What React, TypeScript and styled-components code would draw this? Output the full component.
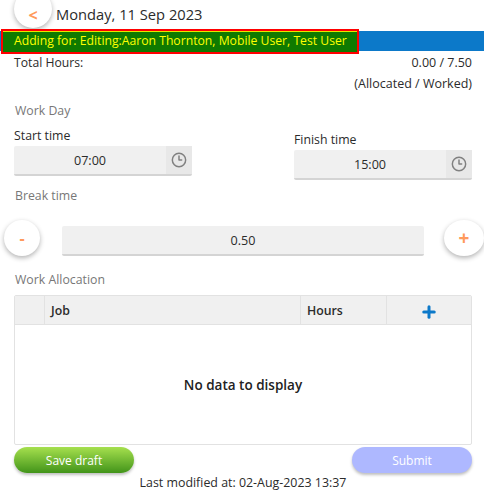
import styled, { createGlobalStyle } from "styled-components";
import { Clock3, Plus } from "lucide-react";

const GlobalStyle = createGlobalStyle`
  html, body {
    margin: 0;
    padding: 0;
    background: #fff;
  }
  body {
    font-family: "Open Sans", "Noto Sans", sans-serif;
    color: #222;
    overflow: hidden;
  }
`;

const Page = styled.div`
  width: 484px;
  height: 503px;
  overflow: hidden;
  display: flex;
  flex-direction: column;
`;

const Header = styled.header`
  height: 28px;
  padding-left: 14px;
  display: flex;
  align-items: flex-start;
  gap: 4px;
`;

const RoundButton = styled.button`
  width: 36px;
  height: 36px;
  flex: none;
  padding: 0;
  border: none;
  border-radius: 50%;
  background: #fff;
  color: #ff9a5c;
  font-family: inherit;
  font-size: 16px;
  font-weight: 700;
  box-shadow: 0 2px 5px rgba(0, 0, 0, 0.3);
  display: flex;
  align-items: center;
  justify-content: center;
`;

const BackButton = styled(RoundButton)`
  width: 38px;
  height: 38px;
  margin-top: -10px;
  padding-top: 11px;
  box-sizing: border-box;
`;

const DateTitle = styled.h1`
  margin: 0;
  font-size: 14.7px;
  font-weight: 400;
  line-height: 29px;
  color: #2b2b2b;
`;

const BlueBar = styled.div`
  height: 20px;
  margin-top: 3px;
  background: #0c79c9;
  display: flex;
  align-items: center;
`;

const Banner = styled.div`
  width: 358px;
  height: 25px;
  margin-left: 1px;
  box-sizing: border-box;
  border: 2px solid #f00;
  background: #0f7a00;
  box-shadow: inset 0 1px 0 #e5e500;
  color: #ff0;
  font-size: 12.2px;
  line-height: 20px;
  padding-left: 11px;
  white-space: nowrap;
`;

const Totals = styled.section`
  padding: 1px 12px 0 14px;
  display: grid;
  grid-template-columns: 1fr auto;
  font-size: 12.2px;
  line-height: 21px;
  color: #2b2b2b;
`;

const TotalValue = styled.div`
  text-align: right;
  font-size: 12.5px;
`;

const SectionLabel = styled.div`
  padding-left: 15px;
  font-size: 12.3px;
  line-height: 18px;
  color: #777;
`;

const WorkDayLabel = styled(SectionLabel)`
  margin-top: 8px;
`;

const TimesRow = styled.div`
  padding: 0 12px 0 14px;
  display: flex;
  justify-content: space-between;
`;

const TimeField = styled.div<{ $offset: number }>`
  width: 178px;
  padding-top: ${(p) => p.$offset}px;
`;

const FieldLabel = styled.label`
  display: block;
  font-size: 12.3px;
  line-height: 18px;
  color: #2b2b2b;
  margin-bottom: 1px;
`;

const InputBox = styled.div`
  height: 30px;
  box-sizing: border-box;
  display: flex;
  background: #f0f0f0;
  border-bottom: 2px solid #d4d4d4;
  border-radius: 2px;
  font-size: 12.6px;
  color: #2b2b2b;
`;

const InputValue = styled.div`
  flex: 1;
  display: flex;
  align-items: center;
  justify-content: center;
`;

const ClockAddon = styled.div`
  width: 26px;
  background: #e8e8e8;
  display: flex;
  align-items: center;
  justify-content: center;
  color: #808080;
`;

const BreakLabel = styled(SectionLabel)`
  margin-top: 7px;
`;

const BreakRow = styled.div`
  margin-top: 15px;
  padding: 0 0 0 4px;
  display: flex;
  align-items: flex-end;
`;

const BreakValue = styled(InputBox)`
  width: 362px;
  margin: 0 20px 0 22px;
  align-items: center;
  justify-content: center;
`;

const AddBreakButton = styled(RoundButton)`
  width: 40px;
  font-size: 19px;
`;

const AllocationLabel = styled(SectionLabel)`
  margin-top: 15px;
`;

const Table = styled.div`
  margin: 6px 12px 0 14px;
  height: 150px;
  box-sizing: border-box;
  border: 1px solid #e2e2e2;
  border-radius: 2px;
  display: flex;
  flex-direction: column;
`;

const TableHead = styled.div`
  height: 29px;
  box-sizing: border-box;
  flex: none;
  display: grid;
  grid-template-columns: 29px 256px 86px 1fr;
  background: #f0f0f0;
  border-bottom: 1px solid #e2e2e2;
`;

const HeadCell = styled.div`
  padding-left: 6px;
  border-left: 1px solid #e2e2e2;
  font-size: 12.3px;
  font-weight: 600;
  color: #2b2b2b;
  display: flex;
  align-items: center;

  &:first-child {
    border-left: none;
  }
`;

const AddCell = styled(HeadCell)`
  padding: 3px 0 0;
  justify-content: center;
  color: #0c79c9;
`;

const EmptyBody = styled.div`
  flex: 1;
  display: flex;
  align-items: center;
  justify-content: center;
  font-size: 13.5px;
  font-weight: 600;
  color: #222;
`;

const Actions = styled.div`
  margin-top: 2px;
  padding: 0 12px 0 14px;
  display: flex;
  justify-content: space-between;
`;

const ActionButton = styled.button`
  width: 120px;
  height: 26px;
  padding: 0;
  border: none;
  border-radius: 13px;
  color: #fff;
  font-family: inherit;
  font-size: 12px;
  font-weight: 500;
  box-shadow: 0 2px 3px rgba(0, 0, 0, 0.25);
`;

const SaveButton = styled(ActionButton)`
  background: linear-gradient(#a6e04e, #42941a);
`;

const SubmitButton = styled(ActionButton)`
  background: #aeb8ff;
`;

const Modified = styled.div`
  margin-top: 2px;
  padding-left: 2px;
  text-align: center;
  font-size: 12.4px;
  line-height: 16px;
  color: #2b2b2b;
`;

export default function App() {
  return (
    <Page>
      <GlobalStyle />
      <Header>
        <BackButton>&lt;</BackButton>
        <DateTitle>Monday, 11 Sep 2023</DateTitle>
      </Header>
      <BlueBar>
        <Banner>Adding for: Editing:Aaron Thornton, Mobile User, Test User</Banner>
      </BlueBar>
      <Totals>
        <div>Total Hours:</div>
        <TotalValue>0.00 / 7.50</TotalValue>
        <div />
        <TotalValue>(Allocated / Worked)</TotalValue>
      </Totals>
      <WorkDayLabel>Work Day</WorkDayLabel>
      <TimesRow>
        <TimeField $offset={7}>
          <FieldLabel>Start time</FieldLabel>
          <InputBox>
            <InputValue>07:00</InputValue>
            <ClockAddon>
              <Clock3 size={16} strokeWidth={2.2} />
            </ClockAddon>
          </InputBox>
        </TimeField>
        <TimeField $offset={11}>
          <FieldLabel>Finish time</FieldLabel>
          <InputBox>
            <InputValue>15:00</InputValue>
            <ClockAddon>
              <Clock3 size={16} strokeWidth={2.2} />
            </ClockAddon>
          </InputBox>
        </TimeField>
      </TimesRow>
      <BreakLabel>Break time</BreakLabel>
      <BreakRow>
        <RoundButton>-</RoundButton>
        <BreakValue>0.50</BreakValue>
        <AddBreakButton>+</AddBreakButton>
      </BreakRow>
      <AllocationLabel>Work Allocation</AllocationLabel>
      <Table>
        <TableHead>
          <HeadCell />
          <HeadCell>Job</HeadCell>
          <HeadCell>Hours</HeadCell>
          <AddCell>
            <Plus size={18} strokeWidth={4} />
          </AddCell>
        </TableHead>
        <EmptyBody>No data to display</EmptyBody>
      </Table>
      <Actions>
        <SaveButton>Save draft</SaveButton>
        <SubmitButton>Submit</SubmitButton>
      </Actions>
      <Modified>Last modified at: 02-Aug-2023 13:37</Modified>
    </Page>
  );
}
